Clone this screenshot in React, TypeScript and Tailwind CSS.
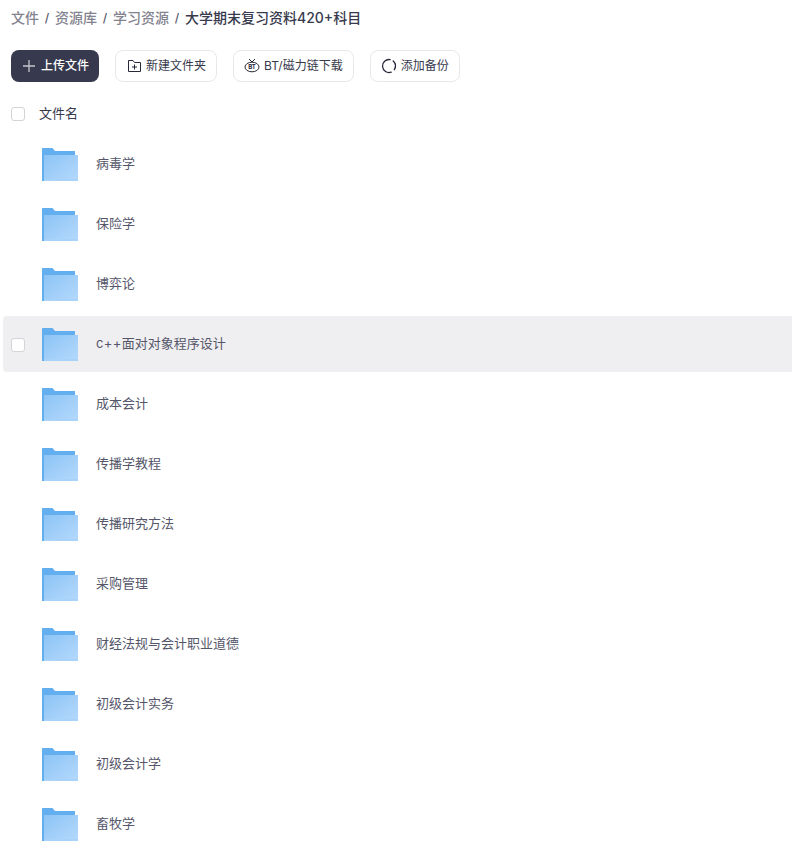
import React from "react";

const folders = [
  "病毒学",
  "保险学",
  "博弈论",
  "c++面对对象程序设计",
  "成本会计",
  "传播学教程",
  "传播研究方法",
  "采购管理",
  "财经法规与会计职业道德",
  "初级会计实务",
  "初级会计学",
  "畜牧学",
];

const FONT = "font-['Inter','Noto_Sans_CJK_SC',sans-serif]";

function FolderIcon({ id }: { id: number }) {
  return (
    <svg width="36" height="34" viewBox="0 0 36 34" className="block shrink-0">
      <defs>
        <linearGradient id={`front-${id}`} x1="0" y1="0" x2="1" y2="1">
          <stop offset="0" stopColor="#8cc4f5" />
          <stop offset="1" stopColor="#b5d9fd" />
        </linearGradient>
      </defs>
      <path d="M0 0.5 Q0 0 0.5 0 H10.5 L13 3 H33 V33 H0 Z" fill="#62aeef" />
      <path d="M2 7 H36 V33 H2 Z" fill={`url(#front-${id})`} />
      <rect x="2" y="31" width="34" height="2" fill="#a9d2f8" />
      <rect x="27" y="12" width="5" height="1" fill="#a5cdf3" />
      <rect x="27" y="14" width="5" height="1" fill="#a5cdf3" />
    </svg>
  );
}

function Checkbox() {
  return <span className="block w-[14px] h-[14px] shrink-0 rounded-[3px] border border-[#d4d4d8] bg-white" />;
}

function ToolButton({ icon, label }: { icon: React.ReactNode; label: string }) {
  return (
    <button className="flex items-center h-8 px-[10px] gap-1 rounded-lg border border-[#e8e8ec] bg-white text-xs text-[#37394d]">
      {icon}
      {label}
    </button>
  );
}

function Slash() {
  return <span className="w-4 text-center text-xs text-[#55566a]">/</span>;
}

export default function App() {
  return (
    <div className={`${FONT} h-[846px] overflow-hidden bg-white text-[#37394d]`}>
      <div className="flex items-center h-9 pl-[11px] text-sm font-medium text-[#83838f]">
        <span>文件</span>
        <Slash />
        <span>资源库</span>
        <Slash />
        <span>学习资源</span>
        <Slash />
        <span className="text-[#37394d]">大学期末复习资料420+科目</span>
      </div>

      <div className="flex items-center gap-4 pl-[11px] mt-[14px]">
        <button className="flex items-center h-8 w-[88px] pl-[11px] gap-[5px] rounded-lg bg-[#37394f] text-xs font-medium text-white">
          <svg width="14" height="14" viewBox="0 0 14 14" fill="none" stroke="#c4c5cc" strokeWidth="1.3">
            <path d="M7 1 V13 M1 7 H13" />
          </svg>
          上传文件
        </button>
        <ToolButton
          label="新建文件夹"
          icon={
            <svg width="14" height="14" viewBox="0 0 14 14" fill="none" stroke="#27283a" strokeWidth="1" strokeLinejoin="round" className="ml-[2px]">
              <path d="M0.5 1.5 H5 L6.5 3.5 H12.5 V12.5 H0.5 Z" />
              <path d="M6.5 5.5 V10.5 M4 8 H9" />
            </svg>
          }
        />
        <ToolButton
          label="BT/磁力链下载"
          icon={
            <svg width="16" height="16" viewBox="0 0 16 16" fill="none" stroke="#27283a" strokeWidth="1">
              <ellipse cx="8" cy="9" rx="7" ry="4.8" />
              <path d="M5 1 L8 4 L11 1" />
              <text x="8" y="11" textAnchor="middle" fontSize="6" fontWeight="700" fill="#27283a" stroke="none">BT</text>
            </svg>
          }
        />
        <ToolButton
          label="添加备份"
          icon={
            <svg width="16" height="16" viewBox="0 0 16 16" fill="none" stroke="#27283a" strokeWidth="1.3" strokeLinecap="round">
              <path d="M12.18 3.02 A6.5 6.5 0 0 1 13.32 11.73" />
              <path d="M10.22 14.11 A6.5 6.5 0 1 1 9.13 1.6" />
            </svg>
          }
        />
      </div>

      <div className="flex items-center h-8 pl-[11px] mt-4 gap-[14px] text-[13px]">
        <Checkbox />
        <span>文件名</span>
      </div>

      <div className="flex flex-col gap-1 ml-[3px] mt-[6px]">
        {folders.map((name, i) => (
          <div
            key={name}
            className={`flex items-center h-14 shrink-0 pl-2 rounded-l-[4px] ${i === 3 ? "bg-[#efeff1]" : ""}`}
          >
            <span className={`mt-[2px] ${i === 3 ? "" : "invisible"}`}>
              <Checkbox />
            </span>
            <span className="ml-[17px] mt-[2px]">
              <FolderIcon id={i} />
            </span>
            <span className="ml-[18px] text-[13px] text-[#55566a]">
              {name.startsWith("c++") ? (
                <>
                  <span className="tracking-[0.4px]">c++</span>
                  {name.slice(3)}
                </>
              ) : (
                name
              )}
            </span>
          </div>
        ))}
      </div>
    </div>
  );
}
